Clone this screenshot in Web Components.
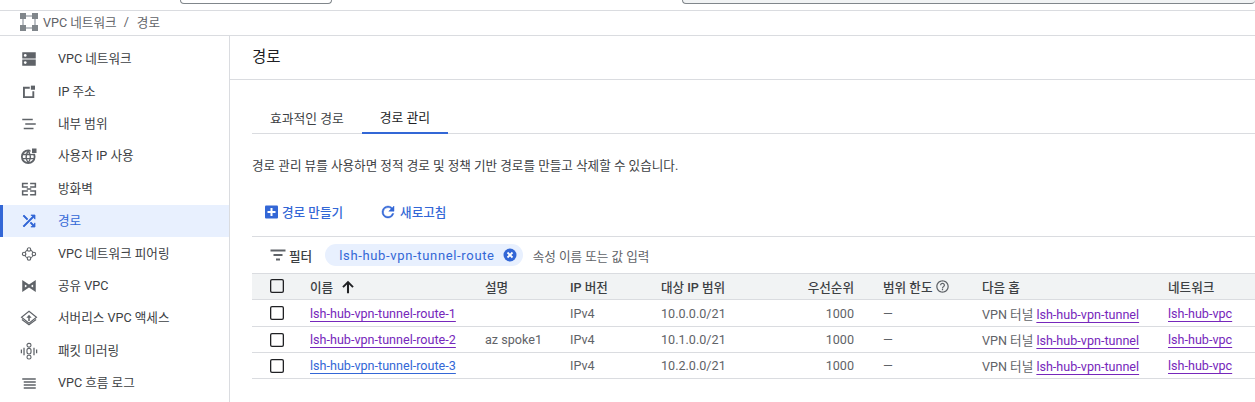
<!DOCTYPE html>
<html lang="ko">
<head>
<meta charset="utf-8">
<style>
  html, body { margin: 0; height: 402px; overflow: hidden; background: #fff; }
  body { font-family: Roboto, "Noto Sans CJK KR", sans-serif; }
</style>
</head>
<body>
<console-page></console-page>

<script>
const icons = {
  vpc: '<path d="M3 3h18v8.300H3zM3 12.700h18V21H3z" fill="#5f6368"/><circle cx="7" cy="7.200" r="1.800" fill="#fff"/><circle cx="7" cy="16.800" r="1.800" fill="#fff"/>',
  ip: '<path d="M13 5H4v15h15v-9h-2.500v6.500h-10v-10H13z" fill="#5f6368"/><path d="M14.500 3.500H20v5.500h-5.500z" fill="#5f6368"/>',
  range: '<path d="M3 5h14v2H3zM7 11h14v2H7zM5 17h13v2H5z" fill="#5f6368"/>',
  globe: '<circle cx="11" cy="13" r="8.500" fill="none" stroke="#5f6368" stroke-width="2.400"/><path d="M3 10h16M3 15.500h16M11 5c-3.500 5-3.500 11 0 16M11 5c3.500 5 3.500 11 0 16" fill="none" stroke="#5f6368" stroke-width="1.800"/><rect x="14" y="1" width="9" height="8" fill="#fff"/><rect x="16" y="2" width="6" height="6" fill="#5f6368"/>',
  firewall: '<path d="M2.500 3.500h8v2h-6v2.800h6v2h-8zM13.500 3.500h8v6.800h-8v-2h6V5.500h-6zM2.500 13.700h8v2h-6v2.800h6v2h-8zM13.500 13.700h8v6.800h-8v-2h6v-2.800h-6zM9 11h6v2H9z" fill="#5f6368"/>',
  routes: '<path d="M10.590 9.170L5.410 4 4 5.410l5.170 5.170 1.420-1.410zM14.500 4l2.040 2.040L4 18.590 5.410 20 17.960 7.460 20 9.500V4h-5.500zm.33 9.410l-1.410 1.410 3.130 3.130L14.500 20H20v-5.500l-2.040 2.040-3.130-3.130z" fill="#3367d6" stroke="#3367d6" stroke-width="1"/>',
  peering: '<circle cx="12" cy="12" r="5.500" fill="none" stroke="#5f6368" stroke-width="1.500"/><g fill="#fff" stroke="#5f6368" stroke-width="1.500"><circle cx="12" cy="6" r="2.300"/><circle cx="12" cy="18" r="2.300"/><circle cx="5.500" cy="12" r="2.300"/><circle cx="18.500" cy="12" r="2.300"/></g>',
  shared: '<path d="M3 4l9 6 9-6v16l-9-6-9 6zM6.500 10v4l3-2zM17.500 10l-3 2 3 2z" fill="#5f6368" fill-rule="evenodd"/>',
  access: '<path d="M12 3l10 8-10 8-10-8z" fill="none" stroke="#5f6368" stroke-width="1.500"/><path d="M2.500 14l9.500 7 9.500-7" fill="none" stroke="#5f6368" stroke-width="1.500"/><path d="M12 7.500l-3.500 4h2.500V16h2v-4.500h2.500z" fill="#5f6368"/>',
  mirror: '<path d="M1 10h1.700v5H1zM4.500 7.500h1.700v10H4.500zM17.800 7.500h1.700v10h-1.700zM21.300 10H23v5h-1.700z" fill="#5f6368"/><rect x="9.300" y="1.800" width="5.400" height="5" rx="2.500" fill="none" stroke="#5f6368" stroke-width="1.500"/><rect x="9.300" y="8.500" width="5.400" height="7.500" rx="2.600" fill="none" stroke="#5f6368" stroke-width="1.500"/><rect x="9.300" y="17.700" width="5.400" height="5" rx="2.500" fill="none" stroke="#5f6368" stroke-width="1.500"/>',
  flow: '<path d="M3 5.500h18v2H3zM5 9.500h16v2H5zM5 13.500h16v2H5zM5 17.500h16v2H5z" fill="#5f6368"/>'
};

const navItems = [
  ['vpc', 'VPC 네트워크'], ['ip', 'IP 주소'], ['range', '내부 범위'],
  ['globe', '사용자 IP 사용'], ['firewall', '방화벽'], ['routes', '경로', true],
  ['peering', 'VPC 네트워크 피어링'], ['shared', '공유 VPC'],
  ['access', '서버리스 VPC 액세스'], ['mirror', '패킷 미러링'], ['flow', 'VPC 흐름 로그']
];

class TopStrip extends HTMLElement {
  connectedCallback() {
    this.attachShadow({ mode: 'open' }).innerHTML = `
    <style>
      :host { display: block; height: 10px; border-bottom: 1px solid #dadce0; overflow: hidden; }
      .row { display: flex; padding-left: 180px; }
      .box { height: 4px; margin-top: -1px; border: 1px solid #80868b; border-top: 0; border-radius: 0 0 4px 4px; }
      .a { width: 150px; }
      .b { flex: 1; margin-left: 350px; background: #f1f3f4; border-right: 0; }
    </style>
    <div class="row"><div class="box a"></div><div class="box b"></div></div>`;
  }
}

class BreadCrumb extends HTMLElement {
  connectedCallback() {
    this.attachShadow({ mode: 'open' }).innerHTML = `
    <style>
      :host { display: flex; align-items: center; padding: 0 0 3px 20px; box-sizing: border-box; height: 25px; border-bottom: 1px solid #dadce0;
        font-size: 12.6px; color: #5f6368; }
      svg { width: 18px; height: 18px; margin-right: 5px; }
      .sep { margin: 0 8px 0 7px; }
    </style>
    <svg viewBox="0 0 18 18"><path d="M6 2h6v2H6zM6 14h6v2H6zM2 6h2v6H2zM14 6h2v6h-2z" fill="#bdc1c6"/><path d="M0 0h6v6H0zM12 0h6v6h-6zM0 12h6v6H0zM12 12h6v6h-6z" fill="#80868b"/></svg>
    <span>VPC 네트워크</span><span class="sep">/</span><span>경로</span>`;
  }
}

class NavItem extends HTMLElement {
  connectedCallback() {
    this.attachShadow({ mode: 'open' }).innerHTML = `
    <style>
      :host { display: flex; align-items: center; height: 32.4px; padding-left: 20px; box-sizing: border-box;
        font-size: 12.6px; color: #3c4043; }
      :host([active]) { background: #e8f0fe; color: #3367d6; box-shadow: inset 3px 0 0 #3367d6; }
      svg { width: 18px; height: 18px; margin-right: 20px; flex: none; }
      .t { margin-bottom: 3px; }
    </style>
    <svg viewBox="0 0 24 24">${icons[this.getAttribute('icon')]}</svg><span class="t"><slot></slot></span>`;
  }
}

class SideNav extends HTMLElement {
  connectedCallback() {
    const items = navItems.map(([icon, label, active]) =>
      `<nav-item icon="${icon}" ${active ? 'active' : ''}>${label}</nav-item>`).join('');
    this.attachShadow({ mode: 'open' }).innerHTML = `
    <style>
      :host { display: block; width: 229px; flex: none; padding-top: 7px; border-right: 1px solid #dadce0; box-sizing: content-box; }
    </style>${items}`;
  }
}

class TabBar extends HTMLElement {
  connectedCallback() {
    this.attachShadow({ mode: 'open' }).innerHTML = `
    <style>
      :host { display: flex; height: 33px; border-bottom: 1px solid #dadce0; font-size: 12.8px; color: #3c4043; }
      div { display: flex; align-items: center; padding: 0 17px 0 18px; margin-bottom: -1px; }
      .on { margin-left: 1px; border-bottom: 2px solid #3367d6; height: 32px; color: #202124; padding: 0 18px; }
    </style>
    <div>효과적인 경로</div><div class="on">경로 관리</div>`;
  }
}

class ActionBar extends HTMLElement {
  connectedCallback() {
    this.attachShadow({ mode: 'open' }).innerHTML = `
    <style>
      :host { display: flex; align-items: center; height: 39px; box-sizing: border-box; padding: 0 0 10px 11px; font-size: 12.6px; font-weight: 500; color: #3367d6; }
      span { display: flex; align-items: center; }
      svg { width: 18px; height: 18px; }
      .add svg { margin-right: 1px; }
      .refresh { margin-left: 36px; }
      .refresh svg { margin-right: 3px; }
    </style>
    <span class="add"><svg viewBox="0 0 18 18"><rect x="2" y="2.500" width="13" height="13" rx="1" fill="#3367d6"/><path d="M7.500 5h2v3h3v2h-3v3h-2v-3h-3V8h3z" fill="#fff"/></svg>경로 만들기</span>
    <span class="refresh"><svg viewBox="0 0 24 24"><path d="M17.650 6.350A7.960 7.960 0 0 0 12 4a8 8 0 1 0 7.740 10h-2.080A6 6 0 1 1 12 6c1.660 0 3.140.69 4.220 1.780L13 11h7V4z" fill="#3367d6" stroke="#3367d6" stroke-width=".6"/></svg>새로고침</span>`;
  }
}

class FilterBar extends HTMLElement {
  connectedCallback() {
    this.attachShadow({ mode: 'open' }).innerHTML = `
    <style>
      :host { display: flex; align-items: center; height: 36px; padding-left: 17px; border-top: 1px solid #dadce0;
        font-size: 12.6px; color: #5f6368; }
      .lbl { font-weight: 500; color: #3c4043; margin-left: 2px; margin-right: 13px; }
      svg.f { width: 18px; height: 18px; }
      .chip { display: flex; align-items: center; height: 22px; padding: 0 5px 0 14px; background: #e8f0fe; border-radius: 11px;
        color: #3367d6; font-size: 13px; letter-spacing: .66px; }
      .chip svg { width: 16px; height: 16px; margin-left: 7px; }
      .hint { margin-left: 10px; }
    </style>
    <svg class="f" viewBox="0 0 18 18"><path d="M1.500 3.500h15v2h-15zM4.500 8h9v2h-9zM7 12.500h4v2H7z" fill="#5f6368"/></svg>
    <span class="lbl">필터</span>
    <span class="chip">lsh-hub-vpn-tunnel-route<svg viewBox="0 0 16 16"><circle cx="8" cy="8" r="6.500" fill="#3367d6"/><path d="M5.500 5.500l5 5M10.500 5.500l-5 5" stroke="#fff" stroke-width="1.800"/></svg></span>
    <span class="hint">속성 이름 또는 값 입력</span>`;
  }
}

class CheckBox extends HTMLElement {
  connectedCallback() {
    this.attachShadow({ mode: 'open' }).innerHTML = `
    <style>:host { display: block; width: 14px; height: 14px; box-shadow: inset 0 0 0 1.300px #202124; border-radius: 2px; }</style>`;
  }
}

class RouteTable extends HTMLElement {
  connectedCallback() {
    const rows = [
      ['lsh-hub-vpn-tunnel-route-1', '', '10.0.0.0/21', false],
      ['lsh-hub-vpn-tunnel-route-2', 'az spoke1', '10.1.0.0/21', false],
      ['lsh-hub-vpn-tunnel-route-3', '', '10.2.0.0/21', true]
    ].map(([name, desc, dest, fresh]) => `
      <div class="row">
        <div class="c"><check-box></check-box></div>
        <div><a class="${fresh ? 'new' : ''}">${name}</a></div>
        <div>${desc}</div>
        <div>IPv4</div>
        <div>${dest}</div>
        <div class="r">1000</div>
        <div class="gap"><span>—</span></div>
        <div>VPN 터널 <a>lsh-hub-vpn-tunnel</a></div>
        <div><a>lsh-hub-vpc</a></div>
      </div>`).join('');
    this.attachShadow({ mode: 'open' }).innerHTML = `
    <style>
      :host { display: block; font-size: 12.6px; color: #5f6368; }
      .row { display: grid; grid-template-columns: 58px 175px 85px 91px 100px 93px 128px 186px 87px; height: 26px; align-items: center;
        border-bottom: 1px solid #dadce0; box-sizing: border-box; white-space: nowrap; }
      .row > div { min-width: 0; }
      .head { height: 27px; padding-bottom: 1px; background: #f1f3f4; border-top: 1px solid #dadce0; font-weight: 500; color: #3c4043; }
      .head + .row { height: 27px; }
      .c { padding-left: 18px; }
      .r { text-align: right; }
      .gap { padding-left: 29px; display: flex; align-items: center; gap: 3px; }
      a { color: #7627bb; text-decoration: underline; text-underline-offset: 3px; }
      a.new { color: #3367d6; }
      .sort { display: inline-block; vertical-align: -3px; width: 16px; height: 16px; margin-left: 7px; }
      .help { width: 15px; height: 15px; }
    </style>
    <div class="row head">
      <div class="c"><check-box></check-box></div>
      <div>이름<svg class="sort" viewBox="0 0 14 14"><path d="M7 1.500l5 5-1.200 1.200-2.900-2.900v7.700H6.100V4.800L3.200 7.700 2 6.500z" fill="#202124"/></svg></div>
      <div>설명</div><div>IP 버전</div><div>대상 IP 범위</div>
      <div class="r">우선순위</div>
      <div class="gap">범위 한도<svg class="help" viewBox="0 0 24 24"><path d="M11 18h2v-2h-2v2zm1-16C6.480 2 2 6.480 2 12s4.480 10 10 10 10-4.480 10-10S17.520 2 12 2zm0 18c-4.410 0-8-3.590-8-8s3.590-8 8-8 8 3.590 8 8-3.590 8-8 8zm0-14c-2.210 0-4 1.790-4 4h2c0-1.100.9-2 2-2s2 .9 2 2c0 2-3 1.750-3 5h2c0-2.250 3-2.500 3-5 0-2.210-1.790-4-4-4z" fill="#5f6368"/></svg></div>
      <div>다음 홉</div><div>네트워크</div>
    </div>${rows}`;
  }
}

class ConsolePage extends HTMLElement {
  connectedCallback() {
    this.attachShadow({ mode: 'open' }).innerHTML = `
    <style>
      :host { display: block; height: 402px; overflow: hidden; }
      .body { display: flex; height: 366px; }
      main { flex: 1; min-width: 0; overflow: hidden; }
      h1 { margin: 0; height: 38px; padding: 0 0 5px 22px; display: flex; align-items: center; font-size: 15.500px; font-weight: 400; color: #202124; border-bottom: 1px solid #dadce0; }
      .content { padding: 20px 0 0 22px; }
      p { margin: 0; height: 63px; box-sizing: border-box; display: flex; align-items: center; font-size: 12.6px; color: #3c4043; padding: 0 0 3px 0; }
    </style>
    <top-strip></top-strip>
    <bread-crumb></bread-crumb>
    <div class="body">
      <side-nav></side-nav>
      <main>
        <h1>경로</h1>
        <div class="content">
          <tab-bar></tab-bar>
          <p>경로 관리 뷰를 사용하면 정적 경로 및 정책 기반 경로를 만들고 삭제할 수 있습니다.</p>
          <action-bar></action-bar>
          <filter-bar></filter-bar>
          <route-table></route-table>
        </div>
      </main>
    </div>`;
  }
}

customElements.define('top-strip', TopStrip);
customElements.define('bread-crumb', BreadCrumb);
customElements.define('nav-item', NavItem);
customElements.define('side-nav', SideNav);
customElements.define('tab-bar', TabBar);
customElements.define('action-bar', ActionBar);
customElements.define('filter-bar', FilterBar);
customElements.define('check-box', CheckBox);
customElements.define('route-table', RouteTable);
customElements.define('console-page', ConsolePage);
</script>
</body>
</html>
